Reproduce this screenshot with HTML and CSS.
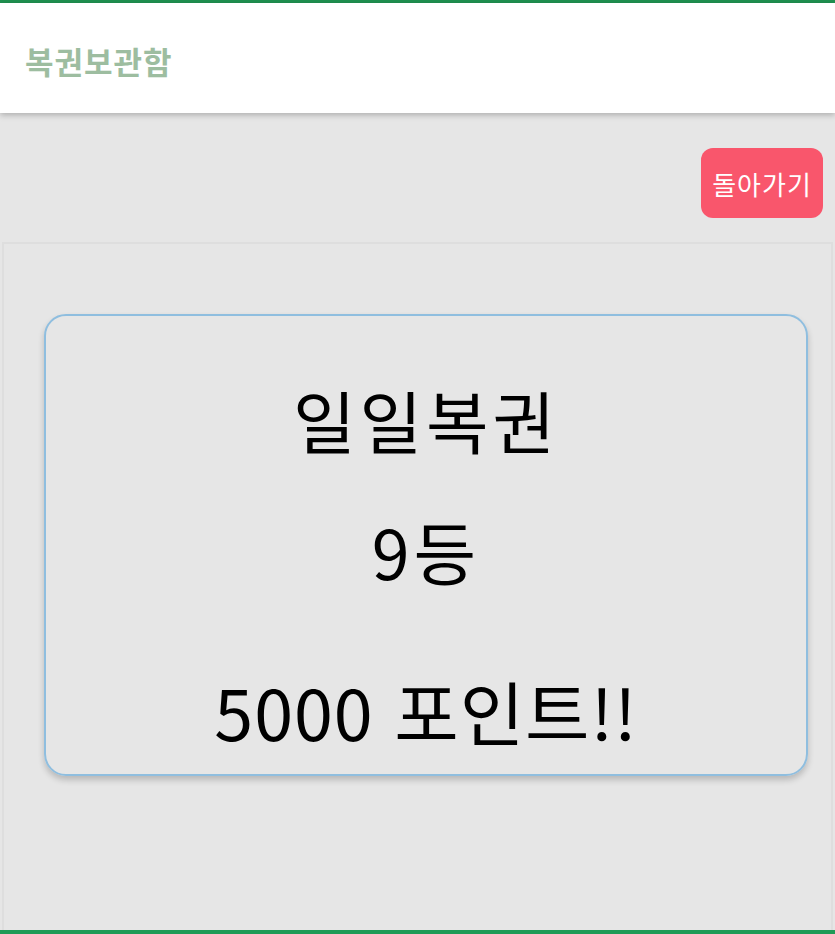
FILE: index.html
```html
<!DOCTYPE html>
<html lang="ko">
<head>
  <meta charset="UTF-8" />
  <title>복권보관함</title>
  <link rel="stylesheet" href="styles.css">
</head>
<body>
  <div class="page">
    <header class="topbar">
      <h1 class="title">복권보관함</h1>
    </header>

    <div class="actions">
      <button class="back-btn" onclick="history.back()">돌아가기</button>
    </div>

    <div class="panel">
      <div class="ticket">
        <p class="ticket-name">일일복권</p>
        <p class="ticket-rank">9등</p>
        <p class="ticket-prize">5000 포인트!!</p>
      </div>
    </div>
  </div>
</body>
</html>
```

FILE: styles.css
```css
html, body {
  margin: 0;
  height: 100%;
}
body {
  font-family: "Noto Sans CJK KR", "Noto Sans", sans-serif;
  background: #e6e6e6;
}
.page {
  height: 934px;
  box-sizing: border-box;
  border-top: 3px solid #1f9150;
  border-bottom: 4px solid #1f9b57;
  display: flex;
  flex-direction: column;
}
.topbar {
  background: white;
  height: 110px;
  display: flex;
  align-items: center;
  padding-left: 25px;
  box-shadow: 0 2px 6px rgba(0, 0, 0, 0.25);
  position: relative;
  z-index: 1;
}
.title {
  margin: 0;
  padding-top: 4px;
  font-size: 31px;
  font-weight: bold;
  letter-spacing: 1px;
  color: #9dbda0;
}
.actions {
  display: flex;
  justify-content: flex-end;
  padding: 35px 12px 24px 0;
}
.back-btn {
  background: #f9566c;
  color: white;
  border: none;
  border-radius: 12px;
  font-family: inherit;
  font-size: 26px;
  letter-spacing: 1px;
  width: 122px;
  height: 70px;
  padding: 0;
  cursor: pointer;
}
.panel {
  flex: 1;
  margin: 0 2px;
  border: 2px solid #dedede;
  border-bottom: none;
  padding: 70px 23px 0 40px;
}
.ticket {
  border: 2px solid #8fbedf;
  border-radius: 22px;
  height: 462px;
  box-shadow: 0 4px 6px rgba(0, 0, 0, 0.2);
  text-align: center;
  padding-top: 54px;
  box-sizing: border-box;
}
.ticket p {
  margin: 0;
  font-size: 68px;
  line-height: 100px;
  letter-spacing: 4px;
}
.ticket-rank {
  margin-top: 31px !important;
}
.ticket-prize {
  margin-top: 60px !important;
  font-size: 70px !important;
  letter-spacing: 1px !important;
}
```
